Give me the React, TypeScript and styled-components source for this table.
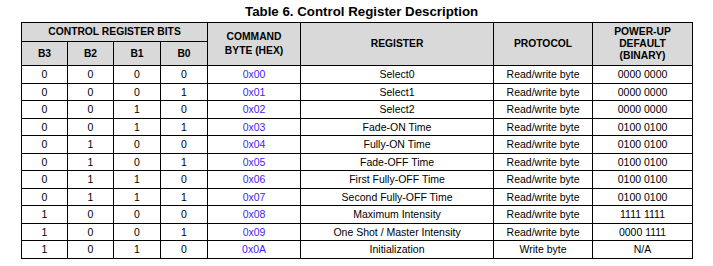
import styled, { createGlobalStyle } from 'styled-components'

const rows = [
  ['0', '0', '0', '0', '0x00', 'Select0', 'Read/write byte', '0000 0000'],
  ['0', '0', '0', '1', '0x01', 'Select1', 'Read/write byte', '0000 0000'],
  ['0', '0', '1', '0', '0x02', 'Select2', 'Read/write byte', '0000 0000'],
  ['0', '0', '1', '1', '0x03', 'Fade-ON Time', 'Read/write byte', '0100 0100'],
  ['0', '1', '0', '0', '0x04', 'Fully-ON Time', 'Read/write byte', '0100 0100'],
  ['0', '1', '0', '1', '0x05', 'Fade-OFF Time', 'Read/write byte', '0100 0100'],
  ['0', '1', '1', '0', '0x06', 'First Fully-OFF Time', 'Read/write byte', '0100 0100'],
  ['0', '1', '1', '1', '0x07', 'Second Fully-OFF Time', 'Read/write byte', '0100 0100'],
  ['1', '0', '0', '0', '0x08', 'Maximum Intensity', 'Read/write byte', '1111 1111'],
  ['1', '0', '0', '1', '0x09', 'One Shot / Master Intensity', 'Read/write byte', '0000 1111'],
  ['1', '0', '1', '0', '0x0A', 'Initialization', 'Write byte', 'N/A'],
]

const widths = [46, 46, 47, 47, 93, 193, 99, 100]

export default function App() {
  return (
    <>
      <GlobalStyle />
      <Page>
        <Title>Table 6. Control Register Description</Title>
        <Table>
          <colgroup>
            {widths.map((w, i) => (
              <col key={i} style={{ width: w }} />
            ))}
          </colgroup>
          <thead>
            <HeadRow $h={19}>
              <Th colSpan={4}>CONTROL REGISTER BITS</Th>
              <Th rowSpan={2} $lh={13.7}>
                COMMAND
                <br />
                BYTE (HEX)
              </Th>
              <Th rowSpan={2}>REGISTER</Th>
              <Th rowSpan={2}>PROTOCOL</Th>
              <Th rowSpan={2} $lh={11.7}>
                POWER-UP
                <br />
                DEFAULT
                <br />
                (BINARY)
              </Th>
            </HeadRow>
            <HeadRow $h={24}>
              <Th>B3</Th>
              <Th>B2</Th>
              <Th>B1</Th>
              <Th>B0</Th>
            </HeadRow>
          </thead>
          <tbody>
            {rows.map((r) => (
              <BodyRow key={r[4]}>
                {r.map((c, i) => (
                  <Td key={i} $hex={i === 4}>
                    {c}
                  </Td>
                ))}
              </BodyRow>
            ))}
          </tbody>
        </Table>
      </Page>
    </>
  )
}

const GlobalStyle = createGlobalStyle`
  body {
    margin: 0;
    background: #ffffff;
    font-family: "Liberation Sans", Arial, sans-serif;
  }
`

const Page = styled.div`
  padding: 1px 0 0 21px;
`

const Title = styled.div`
  height: 21px;
  line-height: 22px;
  padding-left: 224px;
  font-size: 13.3px;
  font-weight: bold;
  color: #000;
`

const Table = styled.table`
  border-collapse: collapse;
  table-layout: fixed;
  width: 672px;
`

const HeadRow = styled.tr<{ $h: number }>`
  height: ${(p) => p.$h}px;
`

const Th = styled.th<{ $lh?: number }>`
  background: #d9d9d9;
  border: 1px solid #000;
  padding: 0;
  font-size: 10.3px;
  font-weight: bold;
  line-height: ${(p) => (p.$lh ? `${p.$lh}px` : '12px')};
  text-align: center;
  vertical-align: middle;
  color: #000;
`

const BodyRow = styled.tr`
  height: 17.5px;
`

const Td = styled.td<{ $hex?: boolean }>`
  border: 1px solid #000;
  padding: 0;
  font-size: 10.5px;
  line-height: 12px;
  text-align: center;
  vertical-align: middle;
  color: ${(p) => (p.$hex ? '#3f1ff2' : '#000')};
`
